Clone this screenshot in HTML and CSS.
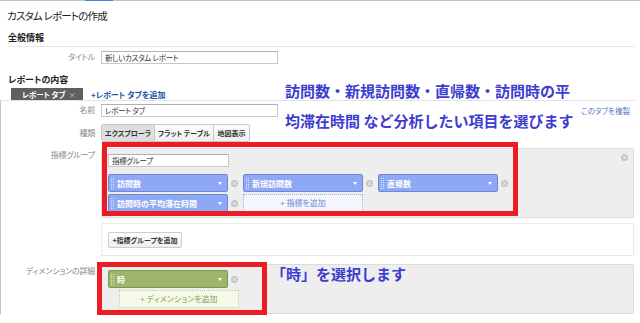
FILE: index.html
```html
<!DOCTYPE html>
<html lang="ja">
  <head>
    <meta charset="UTF-8" />
    <meta name="viewport" content="width=device-width, initial-scale=1.0" />
    <title>カスタム レポートの作成</title>
    <link rel="stylesheet" href="styles.css">
  </head>
  <body>
    <div class="topline"><span class="topline-active"></span></div>
    <h1 class="page-title">カスタム レポートの作成</h1>

    <h2 class="section-title ruled">全般情報</h2>
    <div class="row title-row">
      <label class="row-label">タイトル</label>
      <input class="text-input" type="text" value="新しいカスタム レポート" />
    </div>

    <h2 class="section-title content-title">レポートの内容</h2>
    <div class="tabbar">
      <span class="tab">レポート タブ<span class="tab-close">×</span></span>
      <a class="add-tab" href="#">+レポート タブを追加</a>
    </div>

    <!-- Tab editor -->
    <div class="tab-content">
      <div class="row name-row">
        <label class="row-label">名前</label>
        <input class="text-input" type="text" value="レポート タブ" />
        <a class="copy-tab" href="#">このタブを複製</a>
      </div>

      <div class="row type-row">
        <label class="row-label">種類</label>
        <div class="seg">
          <button class="seg-btn seg-explorer active">エクスプローラ</button>
          <button class="seg-btn seg-flat">フラット テーブル</button>
          <button class="seg-btn seg-map">地図表示</button>
        </div>
      </div>

      <div class="row row-top metric-row">
        <label class="row-label">指標グループ</label>
        <div class="group">
          <svg class="remove group-remove" viewBox="0 0 8 8"><circle cx="4" cy="4" r="4" /><path d="M2.6 2.6l2.8 2.8M5.4 2.6l-2.8 2.8" /></svg>
          <input class="text-input group-name" type="text" value="指標グループ" />
          <div class="chip-row first">
            <div class="chip-item">
              <span class="chip chip-blue"><span class="grip"></span>訪問数<span class="caret"></span></span>
              <svg class="remove" viewBox="0 0 8 8"><circle cx="4" cy="4" r="4" /><path d="M2.6 2.6l2.8 2.8M5.4 2.6l-2.8 2.8" /></svg>
            </div>
            <div class="chip-item">
              <span class="chip chip-blue"><span class="grip"></span>新規訪問数<span class="caret"></span></span>
              <svg class="remove" viewBox="0 0 8 8"><circle cx="4" cy="4" r="4" /><path d="M2.6 2.6l2.8 2.8M5.4 2.6l-2.8 2.8" /></svg>
            </div>
            <div class="chip-item">
              <span class="chip chip-blue"><span class="grip"></span>直帰数<span class="caret"></span></span>
              <svg class="remove" viewBox="0 0 8 8"><circle cx="4" cy="4" r="4" /><path d="M2.6 2.6l2.8 2.8M5.4 2.6l-2.8 2.8" /></svg>
            </div>
          </div>
          <div class="chip-row">
            <div class="chip-item">
              <span class="chip chip-blue"><span class="grip"></span>訪問時の平均滞在時間<span class="caret"></span></span>
              <svg class="remove" viewBox="0 0 8 8"><circle cx="4" cy="4" r="4" /><path d="M2.6 2.6l2.8 2.8M5.4 2.6l-2.8 2.8" /></svg>
            </div>
            <div class="chip-add chip-add-blue">+ 指標を追加</div>
          </div>
        </div>
      </div>

      <div class="row addgroup-row">
        <span class="row-label"></span>
        <div class="add-group-box">
          <button class="small-btn">+指標グループを追加</button>
        </div>
      </div>

      <div class="row row-top dim-row">
        <label class="row-label">ディメンションの詳細</label>
        <div class="group">
          <div class="chip-row">
            <div class="chip-item">
              <span class="chip chip-green"><span class="grip"></span>時<span class="caret"></span></span>
              <svg class="remove" viewBox="0 0 8 8"><circle cx="4" cy="4" r="4" /><path d="M2.6 2.6l2.8 2.8M5.4 2.6l-2.8 2.8" /></svg>
            </div>
          </div>
          <div class="chip-add chip-add-green">+ ディメンションを追加</div>
        </div>
      </div>
    </div>

    <!-- Annotations -->
    <div class="note note-metrics">訪問数・新規訪問数・直帰数・訪問時の平<br />均滞在時間 など分析したい項目を選びます</div>
    <div class="note note-dimension">「時」を選択します</div>
    <div class="highlight highlight-metrics"></div>
    <div class="highlight highlight-dimension"></div>
  </body>
</html>
```

FILE: styles.css
```css
/* Custom report editor with annotations */
* {
  box-sizing: border-box;
}
body {
  margin: 0;
  position: relative;
  width: 640px;
  height: 323px;
  overflow: hidden;
  background: #fff;
  font-family: "Noto Sans CJK JP", sans-serif;
  font-size: 8px;
  font-feature-settings: "palt" 1;
  color: #333;
}
.topline {
  display: flex;
  height: 1px;
  background-color: #c4c4c4;
}
.topline-active {
  width: 28px;
  margin-left: 85px;
  background-color: #4d7fd6;
}
.page-title {
  margin: 6px 0 0 7px;
  font-size: 10.5px;
  line-height: 18px;
  letter-spacing: -0.8px;
  font-weight: normal;
  color: #222;
}
.section-title {
  margin: 6px 5px 0 8px;
  font-size: 9px;
  line-height: 14px;
  font-weight: bold;
  color: #222;
}
.ruled {
  padding-bottom: 1px;
  border-bottom: 1px solid #e6e6e6;
}
.content-title {
  margin-top: 9px;
}
.row {
  display: flex;
  align-items: center;
}
.row-top {
  align-items: flex-start;
}
.row-label {
  flex-shrink: 0;
  width: 96px;
  padding-right: 1px;
  margin-right: 5px;
  text-align: right;
  line-height: 14px;
  letter-spacing: -0.2px;
  color: #888;
}
.title-row {
  margin-top: 3px;
}
.text-input {
  width: 177px;
  height: 13px;
  padding: 0 3px;
  border: 1px solid #c8c8c8;
  border-top-color: #b0b0b0;
  font-family: inherit;
  font-size: 7.5px;
  letter-spacing: -0.3px;
  font-feature-settings: "palt" 1;
  color: #333;
  background: #fff;
}

/* Tabs */
.tabbar {
  display: flex;
  align-items: center;
  margin-top: 1px;
  height: 12px;
}
.tab {
  display: flex;
  align-items: center;
  width: 72px;
  height: 12px;
  margin-left: 11px;
  padding-left: 11px;
  background-color: #5f5f5f;
  color: #fff;
  font-size: 7.5px;
  font-weight: bold;
  white-space: nowrap;
}
.tab-close {
  margin-left: auto;
  padding-right: 7px;
  color: #c0c0c0;
  font-weight: normal;
}
.add-tab {
  margin-left: 8px;
  color: #2356a8;
  font-weight: bold;
  text-decoration: none;
  white-space: nowrap;
}
.tab-content {
  width: 635px;
  border-left: 1px solid #c4c4c4;
  border-top: 1px solid #e2e2e2;
}
.tab-content .row-label {
  width: 95px;
}
.name-row {
  margin-top: 2px;
}
.copy-tab {
  margin-left: auto;
  margin-right: 5px;
  font-size: 7.5px;
  color: #5577bb;
  text-decoration: none;
}
.type-row {
  margin-top: 7px;
}
.seg {
  display: flex;
  height: 18px;
  border: 1px solid #c8c8c8;
  border-radius: 2px;
  overflow: hidden;
}
.seg-btn {
  height: 16px;
  padding: 0;
  border: none;
  border-left: 1px solid #c8c8c8;
  background: linear-gradient(#fbfbfb, #f0f0f0);
  font-family: inherit;
  font-size: 7px;
  font-weight: bold;
  font-feature-settings: "palt" 1;
  color: #333;
}
.seg-btn:first-child {
  border-left: none;
}
.seg-btn.active {
  background: #dedede;
}
.seg-explorer {
  width: 52px;
}
.seg-flat {
  width: 59px;
}
.seg-map {
  width: 36px;
}

/* Metric and dimension groups */
.metric-row {
  margin-top: 6px;
}
.group {
  position: relative;
  flex: 1;
  margin-right: 1px;
  padding: 5px 6px;
  border: 1px solid #dcdcdc;
  border-radius: 2px;
  background-color: #eeeeee;
}
.group-name {
  display: block;
  width: 121px;
}
.chip-row {
  display: flex;
  margin-top: 2px;
}
.chip-row.first {
  margin-top: 7px;
}
.dim-row .chip-row {
  margin-top: 0;
}
.chip-item {
  display: flex;
  align-items: center;
  margin-right: 5px;
}
.chip {
  display: flex;
  align-items: center;
  width: 120px;
  height: 18px;
  padding-left: 2px;
  border-radius: 2px;
  color: #fff;
  font-weight: bold;
  font-size: 8px;
}
.chip-blue {
  background-color: #8fa8f6;
  border: 1px solid #6e88d8;
}
.chip-green {
  background-color: #9db56c;
  border: 1px solid #7c994b;
}
.grip {
  width: 4px;
  height: 11px;
  margin-right: 2px;
  background-image:
    linear-gradient(rgba(255, 255, 255, 0.7) 50%, transparent 50%),
    linear-gradient(rgba(255, 255, 255, 0.7) 50%, transparent 50%);
  background-size: 1px 2px, 1px 2px;
  background-position: 0 0, 2px 0;
  background-repeat: repeat-y;
}
.caret {
  margin-left: auto;
  margin-right: 5px;
  border-left: 2.5px solid transparent;
  border-right: 2.5px solid transparent;
  border-top: 3px solid #fff;
}
.remove {
  width: 7px;
  height: 7px;
  margin-left: 3px;
}
.remove circle {
  fill: #c6c6c6;
}
.remove path {
  stroke: #fff;
  stroke-width: 1;
}
.group-remove {
  position: absolute;
  top: 5px;
  right: 5px;
  margin: 0;
}
.chip-add {
  width: 120px;
  height: 18px;
  line-height: 16px;
  text-align: center;
  font-size: 8px;
}
.chip-add-blue {
  border: 1px dotted #9fb0de;
  background-color: #f4f6fe;
  color: #6d88cf;
}
.chip-add-green {
  margin-top: 2px;
  margin-left: 11px;
  border: 1px dotted #c2d396;
  background-color: #f5fae8;
  color: #8aa05a;
}
.addgroup-row {
  margin-top: 5px;
}
.add-group-box {
  flex: 1;
  margin-right: 1px;
  height: 33px;
  padding: 8px 6px 7px;
  border: 1px dotted #d6d6d6;
}
.small-btn {
  display: block;
  width: 74px;
  height: 16px;
  padding: 0;
  border: 1px solid #cccccc;
  border-radius: 2px;
  background: linear-gradient(#ffffff, #eeeeee);
  font-family: inherit;
  font-size: 7px;
  font-weight: bold;
  font-feature-settings: "palt" 1;
  color: #333;
}
.dim-row {
  margin-top: 8px;
}

/* Annotation overlays */
.note {
  position: absolute;
  font-size: 15px;
  font-weight: bold;
  font-feature-settings: normal;
  color: #3d3dcf;
  white-space: nowrap;
}
.note-metrics {
  left: 285px;
  top: 76px;
  line-height: 30px;
}
.note-dimension {
  left: 271px;
  top: 264px;
  line-height: 20px;
}
.highlight {
  position: absolute;
  border: 5px solid #ea1c24;
}
.highlight-metrics {
  left: 102px;
  top: 142px;
  width: 416px;
  height: 74px;
}
.highlight-dimension {
  left: 97px;
  top: 262px;
  width: 170px;
  height: 53px;
}
```
